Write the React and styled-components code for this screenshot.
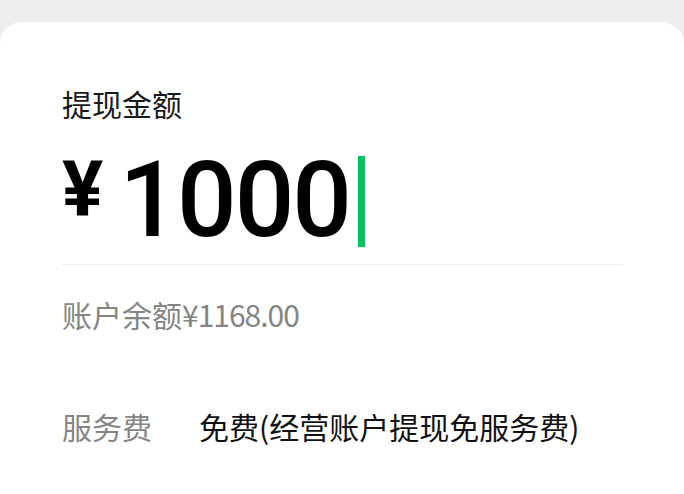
import styled, { createGlobalStyle } from 'styled-components'

const GlobalStyle = createGlobalStyle`
  html, body {
    margin: 0;
    padding: 0;
    background: #ededed;
    font-family: "Noto Sans CJK SC", "Noto Sans", sans-serif;
  }
`;

const Page = styled.div`
  width: 684px;
  height: 494px;
  overflow: hidden;
  padding-top: 22px;
  box-sizing: border-box;
`;

const Card = styled.div`
  background: #fff;
  border-radius: 22px 22px 0 0;
  height: 100%;
  padding: 66px 61px 0 62px;
  box-sizing: border-box;
`;

const Title = styled.div`
  font-size: 30px;
  line-height: 30px;
  color: #1a1a1a;
`;

const AmountRow = styled.div`
  display: flex;
  align-items: flex-start;
  margin-top: 30px;
  padding-bottom: 11px;
  border-bottom: 1px solid #efefef;
`;

const Yen = styled.span`
  font-family: Roboto, "Liberation Sans", sans-serif;
  font-weight: 700;
  font-size: 77px;
  line-height: 77px;
  margin-top: 4px;
  color: #000;
`;

const Digits = styled.span`
  font-family: Roboto, "Liberation Sans", sans-serif;
  font-weight: 500;
  font-size: 105px;
  line-height: 105px;
  letter-spacing: -2px;
  margin-left: 16px;
  color: #000;
`;

const Cursor = styled.span`
  display: inline-block;
  width: 7px;
  height: 91px;
  margin-top: 8px;
  margin-left: 8px;
  background: #07c160;
`;

const Balance = styled.div`
  margin-top: 34px;
  font-size: 30px;
  line-height: 30px;
  color: #858585;
`;

const BalanceNum = styled.span`
  letter-spacing: -1px;
`;

const FeeRow = styled.div`
  display: flex;
  margin-top: 82px;
  font-size: 30px;
  line-height: 30px;
`;

const FeeLabel = styled.span`
  width: 137px;
  color: #858585;
`;

const FeeValue = styled.span`
  color: #111;
`;

export default function App() {
  return (
    <Page>
      <GlobalStyle />
      <Card>
        <Title>提现金额</Title>
        <AmountRow>
          <Yen>¥</Yen>
          <Digits>1000</Digits>
          <Cursor />
        </AmountRow>
        <Balance>
          账户余额<BalanceNum>¥1168.00</BalanceNum>
        </Balance>
        <FeeRow>
          <FeeLabel>服务费</FeeLabel>
          <FeeValue>免费(经营账户提现免服务费)</FeeValue>
        </FeeRow>
      </Card>
    </Page>
  )
}
